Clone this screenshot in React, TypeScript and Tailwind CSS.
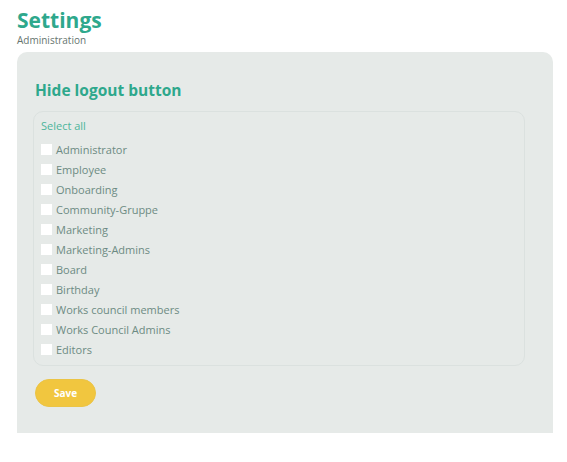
const groups = [
  'Administrator',
  'Employee',
  'Onboarding',
  'Community-Gruppe',
  'Marketing',
  'Marketing-Admins',
  'Board',
  'Birthday',
  'Works council members',
  'Works Council Admins',
  'Editors',
]

export default function App() {
  return (
    <div className="min-h-[462px] bg-white pl-[17px] pr-[14px] font-['Open_Sans',sans-serif]">
      <h1 className="pt-[7px] text-[21px] font-bold leading-[26px] text-[#2ea88c]">Settings</h1>
      <p className="text-[10px] leading-[14px] text-[#66756f]">Administration</p>

      <div className="mt-[5px] h-[381px] rounded-t-[10px] bg-[#e6eae8] px-[16px] pt-[27px]">
        <h2 className="pl-[2px] text-[15.5px] font-bold leading-[22px] text-[#2ea88c]">Hide logout button</h2>

        <div className="mt-[10px] w-[492px] rounded-[10px] border border-[#dbe1df] px-[7px] pb-[5px] pt-[6px]">
          <div className="text-[11px] leading-[16px] text-[#4db59b]">Select all</div>
          <div className="mt-[6px] flex flex-col">
            {groups.map((g) => (
              <label key={g} className="flex h-[20px] items-center gap-[4px]">
                <span className="mb-[2px] h-[11px] w-[11px] bg-white" />
                <span className="text-[11px] text-[#6d8a83]">{g}</span>
              </label>
            ))}
          </div>
        </div>

        <button className="ml-[2px] mt-[13px] h-[28px] w-[61px] rounded-full border border-[#ebc445] bg-[#f1c63f] text-[10px] font-bold text-white">
          Save
        </button>
      </div>
    </div>
  )
}
